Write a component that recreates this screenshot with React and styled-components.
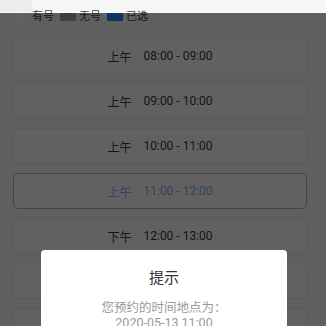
import React from "react";
import styled, { createGlobalStyle } from "styled-components";

const GlobalStyle = createGlobalStyle`
  html, body {
    margin: 0;
    padding: 0;
    background: #fafafa;
    font-family: Roboto, "Noto Sans CJK SC", sans-serif;
  }
  body {
    overflow: hidden;
  }
`;

const slots = [
  { period: "上午", time: "08:00 - 09:00" },
  { period: "上午", time: "09:00 - 10:00" },
  { period: "上午", time: "10:00 - 11:00" },
  { period: "上午", time: "11:00 - 12:00", selected: true },
  { period: "下午", time: "12:00 - 13:00" },
  { period: "下午", time: "13:00 - 14:00" },
  { period: "下午", time: "14:00 - 15:00" },
];

const legend = [
  { label: "有号", color: "#ffffff" },
  { label: "无号", color: "#a6a6a6" },
  { label: "已选", color: "#2f86ff" },
];

const App = () => {
  return (
    <>
      <GlobalStyle />
      <Header>
        <HeaderLeft />
        <HeaderRight>
          <span>请选择预约时间</span>
        </HeaderRight>
      </Header>
      <Legend>
        {legend.map((item) => (
          <LegendItem key={item.label}>
            <Swatch color={item.color} />
            <span>{item.label}</span>
          </LegendItem>
        ))}
      </Legend>
      <List>
        {slots.map((slot) => (
          <Slot key={slot.time} selected={slot.selected}>
            <span>{slot.period}</span>
            <span>{slot.time}</span>
          </Slot>
        ))}
      </List>

      <Overlay>
        <Dialog>
          <Title>提示</Title>
          <Message>
            <p>您预约的时间地点为：</p>
            <p>2020-05-13 11:00</p>
          </Message>
        </Dialog>
      </Overlay>
    </>
  );
};

const Header = styled.div`
  height: 12px;
  display: flex;
  background: #ececec;
  border-bottom: 1px solid #ffffff;
  overflow: hidden;
`;

const HeaderLeft = styled.div`
  width: 32px;
`;

const HeaderRight = styled.div`
  flex: 1;
  background: #f6f6f6;
  span {
    display: block;
    margin-top: -15px;
    line-height: 17px;
    font-size: 13px;
    color: #c8c8c8;
  }
`;

const Legend = styled.div`
  display: flex;
  align-items: center;
  gap: 6px;
  height: 8px;
  padding-left: 13px;
  font-size: 11px;
  color: #444;
`;

const LegendItem = styled.div`
  display: flex;
  align-items: center;
  gap: 3px;
  line-height: 8px;
`;

const Swatch = styled.i`
  display: block;
  width: 16px;
  height: 8px;
  background: ${(p) => p.color};
`;

const List = styled.div`
  display: flex;
  flex-direction: column;
  gap: 9px;
  padding: 17px 19px 0 13px;
`;

const Slot = styled.div`
  height: 34px;
  display: flex;
  align-items: center;
  justify-content: center;
  gap: 12px;
  background: #ffffff;
  border: 1px solid ${(p) => (p.selected ? "#9cb6de" : "#ececec")};
  border-radius: ${(p) => (p.selected ? "5px" : "3px")};
  font-size: 12px;
  color: ${(p) => (p.selected ? "#86b2f0" : "#3a3a3a")};
`;

const Overlay = styled.div`
  position: fixed;
  top: 13px;
  left: 0;
  right: 0;
  bottom: 0;
  background: rgba(0, 0, 0, 0.62);
`;

const Dialog = styled.div`
  position: absolute;
  top: 237px;
  left: 41px;
  width: 246px;
  height: 120px;
  background: #ffffff;
  border-radius: 4px;
  text-align: center;
`;

const Title = styled.div`
  padding-top: 18px;
  font-size: 15px;
  line-height: 20px;
  color: #333;
`;

const Message = styled.div`
  margin-top: 12px;
  font-size: 12.5px;
  line-height: 15px;
  color: #999;
  p {
    margin: 0;
  }
`;

export default App;
